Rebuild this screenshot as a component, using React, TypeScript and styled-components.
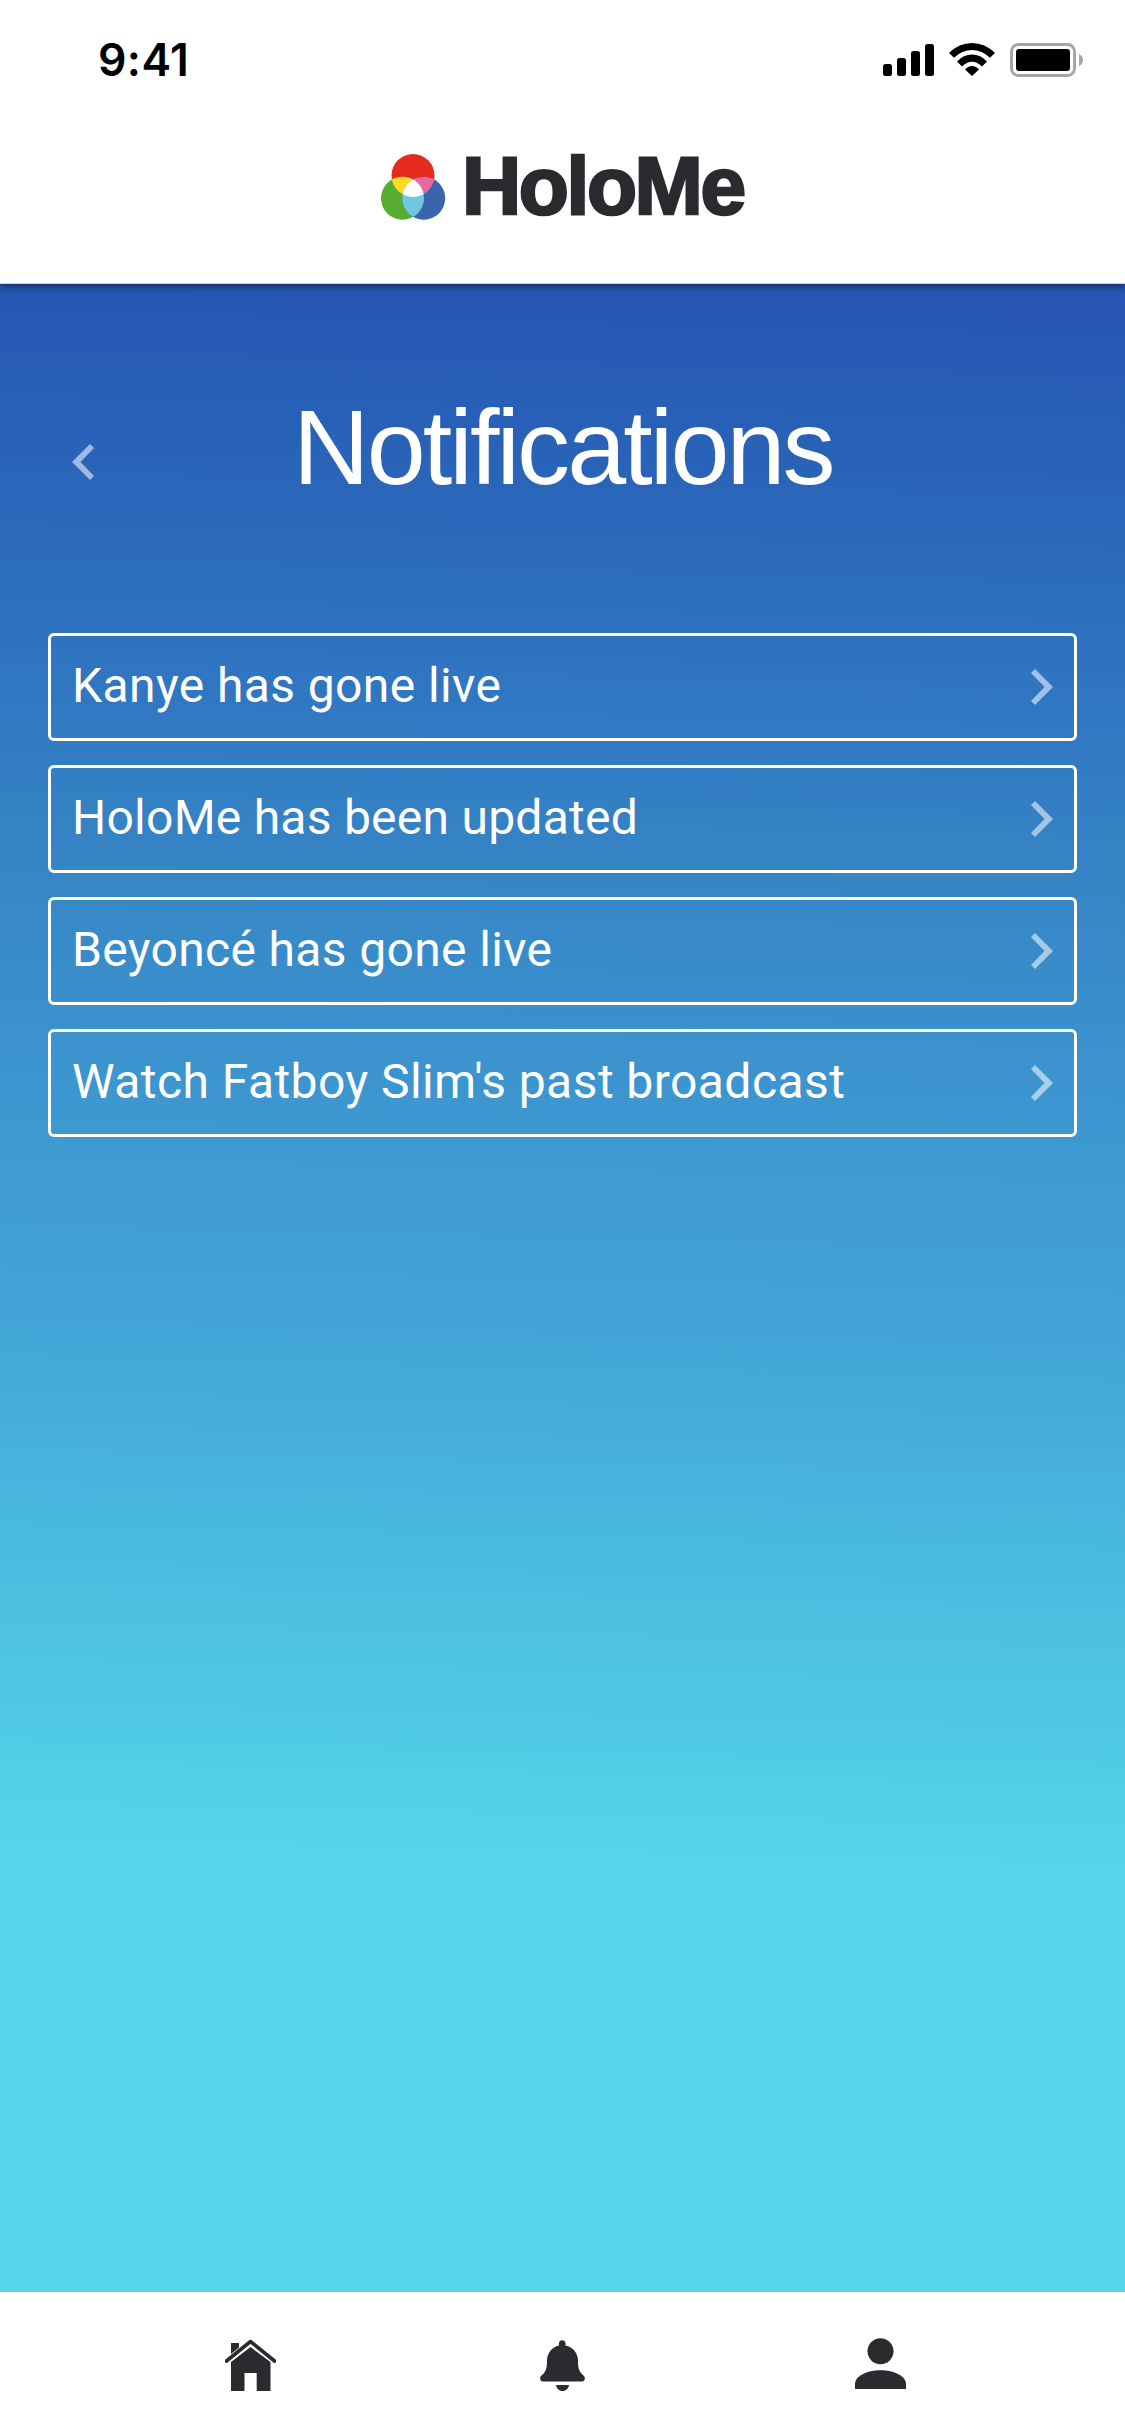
import React from "react";
import styled, { createGlobalStyle } from "styled-components";

const GlobalStyle = createGlobalStyle`
  * { box-sizing: border-box; }
  html, body { margin: 0; padding: 0; background: #fff; }
  body { width: 1125px; height: 2436px; overflow: hidden; }
`;

const ink = "#2b2a2f";

const Screen = styled.div`
  width: 1125px;
  height: 2436px;
  display: flex;
  flex-direction: column;
  overflow: hidden;
  font-family: Roboto, "Liberation Sans", sans-serif;
`;

const Header = styled.header`
  flex: none;
  height: 284px;
  background: #fff;
  border-bottom: 1px solid #c5d3e8;
  box-shadow: 0 3px 6px rgba(0, 0, 0, 0.42);
  z-index: 1;
`;

const StatusBar = styled.div`
  height: 120px;
  padding: 0 42px 0 98px;
  display: flex;
  justify-content: space-between;
`;

const Clock = styled.span`
  padding-top: 33px;
  font: 600 44.5px/54px Inter, sans-serif;
  letter-spacing: 0.4px;
  color: #000;
`;

const StatusIcons = styled.svg`
  width: 200px;
  height: 34px;
  margin-top: 43px;
`;

const Brand = styled.div`
  display: flex;
  padding-left: 381px;
  height: 120px;
`;

const BrandMark = styled.svg`
  width: 65px;
  height: 66px;
  margin-top: 34px;
`;

const BrandName = styled.span`
  margin: 18px 0 0 16px;
  font: 700 82px/96px "Liberation Sans", sans-serif;
  letter-spacing: -2.4px;
  color: ${ink};
  -webkit-text-stroke: 2.6px ${ink};
`;

const Content = styled.main`
  flex: 1;
  background: linear-gradient(
    181.3deg,
    #2654b3 0%,
    #2a66b9 11%,
    #2e72c0 18%,
    #3481c4 27%,
    #3e98d0 42%,
    #42a4d7 52%,
    #49b8de 62%,
    #54d5e9 78%,
    #54d5e9 100%
  );
`;

const TitleRow = styled.div`
  display: flex;
  height: 349px;
  padding-left: 72px;
`;

const BackButton = styled.button`
  display: flex;
  width: 22px;
  height: 36px;
  margin-top: 160px;
  padding: 0;
  border: 0;
  background: none;
`;

const Title = styled.h1`
  margin: 103px 0 0 199px;
  font: 400 106px/120px "Liberation Sans", sans-serif;
  letter-spacing: -2.9px;
  color: #fff;
`;

const List = styled.div`
  display: flex;
  flex-direction: column;
  gap: 24px;
  padding: 0 48px;
`;

const Row = styled.div`
  display: flex;
  align-items: center;
  justify-content: space-between;
  height: 108px;
  padding: 0 21px;
  border: 3px solid #fff;
  border-radius: 6px;
`;

const RowText = styled.span<{ $tracking: number }>`
  font-size: 48px;
  line-height: 56px;
  letter-spacing: ${(p) => p.$tracking}px;
  padding-bottom: 2px;
  color: #fff;
`;

const Arrow = styled.svg<{ $flip?: boolean }>`
  width: 22px;
  height: 36px;
  transform: ${(p) => (p.$flip ? "scaleX(-1)" : "none")};
`;

const TabBar = styled.nav`
  flex: none;
  height: 144px;
  padding: 46px 219px 0 225px;
  display: flex;
  justify-content: space-between;
  background: #fff;
`;

const TabIcon = styled.svg`
  width: 51px;
  height: 54px;
  fill: ${ink};
`;

const Chevron = ({ flip }: { flip?: boolean }) => (
  <Arrow $flip={flip} viewBox="0 0 22 36">
    <path d="M4 0L22 18L4 36L0 32L13.5 18L0 4Z" fill="#fff" fillOpacity="0.55" />
  </Arrow>
);

const notifications = [
  { text: "Kanye has gone live", tracking: 0.4 },
  { text: "HoloMe has been updated", tracking: 0.25 },
  { text: "Beyoncé has gone live", tracking: 0.35 },
  { text: "Watch Fatboy Slim's past broadcast", tracking: 0.44 },
];

export default function App() {
  return (
    <>
      <GlobalStyle />
      <Screen>
        <Header>
          <StatusBar>
            <Clock>9:41</Clock>
            <StatusIcons viewBox="883 43 200 34">
              <rect x="883" y="64" width="9" height="12" rx="2.5" />
              <rect x="897" y="58" width="9" height="18" rx="2.5" />
              <rect x="911" y="51" width="9" height="25" rx="2.5" />
              <rect x="925" y="44" width="9" height="32" rx="2.5" />
              <path d="M949 53Q959 43 972 43T995 53L990 57.8Q982 50 972 50T954 57.8Z" />
              <path d="M957 61.5Q963.500 54.500 972 54.500T987 61.500L982 66.500Q977.500 61.800 972 61.800T962 66.500Z" />
              <path d="M965 69.500Q968 66 972 66T979 69.500L972 76Z" />
              <rect x="1011.500" y="44.500" width="63" height="31" rx="7" fill="none" stroke="#a6a6a6" strokeWidth="3" />
              <rect x="1016" y="49" width="54" height="22" rx="3" />
              <path d="M1079 54Q1083 56 1083 60T1079 66Z" fill="#a6a6a6" />
            </StatusIcons>
          </StatusBar>
          <Brand>
            <BrandMark viewBox="381 154 65 66">
              <defs>
                <clipPath id="inRed"><circle cx="413" cy="175.500" r="21.500" /></clipPath>
                <clipPath id="inGreen"><circle cx="402.500" cy="198.200" r="21.500" /></clipPath>
              </defs>
              <circle cx="413" cy="175.500" r="21.500" fill="#e52b1d" />
              <circle cx="402.500" cy="198.200" r="21.500" fill="#56ad32" />
              <circle cx="423.700" cy="198.200" r="21.500" fill="#3b64ad" />
              <circle cx="402.500" cy="198.200" r="21.500" fill="#fcdc20" clipPath="url(#inRed)" />
              <circle cx="423.700" cy="198.200" r="21.500" fill="#ec679f" clipPath="url(#inRed)" />
              <circle cx="423.700" cy="198.200" r="21.500" fill="#70c7e0" clipPath="url(#inGreen)" />
              <g clipPath="url(#inGreen)">
                <circle cx="423.700" cy="198.200" r="21.500" fill="#fff" clipPath="url(#inRed)" />
              </g>
            </BrandMark>
            <BrandName>HoloMe</BrandName>
          </Brand>
        </Header>
        <Content>
          <TitleRow>
            <BackButton aria-label="Back"><Chevron flip /></BackButton>
            <Title>Notifications</Title>
          </TitleRow>
          <List>
            {notifications.map(({ text, tracking }) => (
              <Row key={text}>
                <RowText $tracking={tracking}>{text}</RowText>
                <Chevron />
              </Row>
            ))}
          </List>
        </Content>
        <TabBar>
          <TabIcon viewBox="225 2338 51 54">
            <path d="M231 2343H239V2347.500L231 2354Z" />
            <path d="M226.500 2361L250.500 2341.500L274.500 2361" fill="none" stroke={ink} strokeWidth="3.600" strokeLinecap="round" strokeLinejoin="round" />
            <path d="M231 2362L250.500 2347L270.500 2362V2391H256.700V2373H244.500V2391H231Z" />
          </TabIcon>
          <TabIcon viewBox="540 2338 51 54">
            <path d="M559 2345.500V2343A3.300 3.300 0 0 1 565.500 2343V2345.500C573 2347 578 2353 578 2361C578 2369 579.500 2372 583.500 2375.500C586 2378 585 2381.500 582 2381.500H543C540 2381.500 539 2378 541.500 2375.500C545.500 2372 547 2369 547 2361C547 2353 552 2347 559 2345.500Z" />
            <path d="M556 2385H569C568.500 2388.500 566 2391 562.500 2391S556.500 2388.500 556 2385Z" />
          </TabIcon>
          <TabIcon viewBox="855 2338 51 54">
            <circle cx="880.500" cy="2351.200" r="13" />
            <path d="M855 2389V2384C855 2376 867 2370.200 880.500 2370.200S906 2376 906 2384V2389Z" />
          </TabIcon>
        </TabBar>
      </Screen>
    </>
  );
}
